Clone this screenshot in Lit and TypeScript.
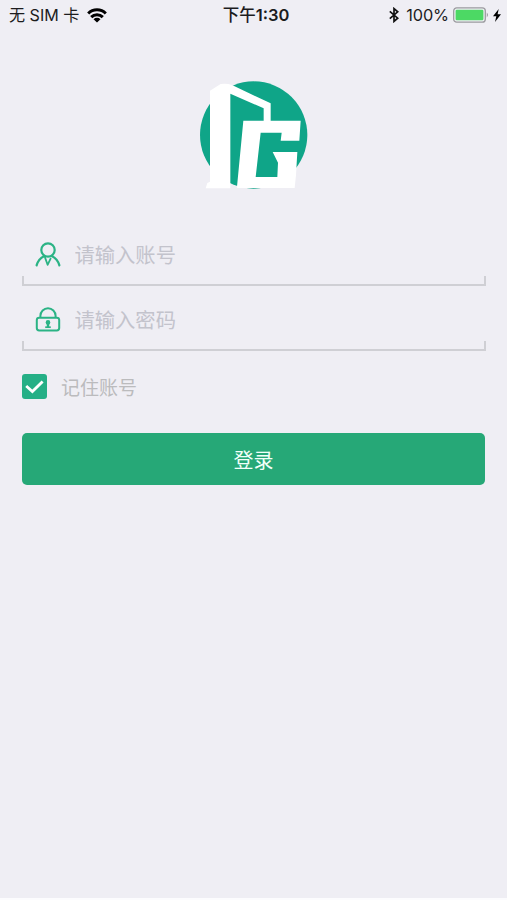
import { LitElement, html, css, svg } from "lit";
import { customElement, property, state } from "lit/decorators.js";

const userIcon = svg`<g fill="none" stroke="#2bb385" stroke-width="2.2" stroke-linecap="round" stroke-linejoin="round">
  <circle cx="13" cy="8" r="6.7"/>
  <path d="M1.6 23.4C2.8 18.8 5.6 15.6 9.4 13.9M24.4 23.4C23.2 18.8 20.4 15.6 16.6 13.9"/>
  <path d="M10 15.4L12.6 22.8L15.6 16.6" stroke-width="1.8"/>
</g>`;

const lockIcon = svg`<g fill="none" stroke="#2bb385" stroke-width="2">
  <rect x="1.8" y="10.7" width="22.4" height="12.8" rx="2.4"/>
  <path d="M5.4 10.4V8.8a7.6 7.6 0 0 1 15.2 0v1.6"/>
  <circle cx="13" cy="15.4" r="2.3" fill="#2bb385" stroke="none"/>
  <path d="M13 16v4.2" stroke-width="2.4"/><path d="M10.2 20.2h5.6" stroke-width="1.7"/>
</g>`;

@customElement("status-bar")
class StatusBar extends LitElement {
  static styles = css`
    :host { display: grid; grid-template-columns: 1fr auto 1fr; align-items: center; height: 30px; padding: 0 6px 0 9px; color: #1c1c1e; font-size: 16px; line-height: 30px; white-space: nowrap; }
    .side { display: flex; align-items: center; }
    .end { justify-content: flex-end; }
    .carrier { font-size: 16.1px; }
    .wifi { margin-left: 8px; }
    .time { font-weight: 600; font-size: 16.5px; margin-left: 2px; }
    .time span { font-weight: 500; }
    .percent { margin: 0 4px 0 7px; font-size: 16.3px; letter-spacing: -0.1px; }
    .bolt { margin-left: 4px; }
    svg { display: block; flex: none; }
  `;
  render() {
    return html`
      <div class="side">
        <span class="carrier">无 SIM 卡</span>
        <svg class="wifi" width="20" height="15" viewBox="0 0 20 15">
          <g fill="none" stroke="#000" stroke-width="3"><path d="M1.2 5.5a12.4 12.4 0 0 1 17.6 0"/><path d="M4.2 9.1a8.2 8.2 0 0 1 11.6 0"/></g>
          <path d="M6.5 11.2a4.9 4.9 0 0 1 7 0L10 14.6z"/>
        </svg>
      </div>
      <span class="time"><span>下午</span>1:30</span>
      <div class="side end">
        <svg width="10" height="16" viewBox="0 0 10 16"><path d="M.8 4.4L8.7 11.2L5 14.4V1.6L8.7 4.8L.8 11.6" fill="none" stroke="#111" stroke-width="1.7"/></svg>
        <span class="percent">100%</span>
        <svg width="36" height="16" viewBox="0 0 36 16"><rect x=".7" y=".8" width="31.6" height="14.4" rx="3" fill="none" stroke="#9b9b9f" stroke-width="1.3"/><rect x="2.6" y="2.8" width="27.8" height="10.4" rx="1.2" fill="#4cd964"/><path d="M33.8 5.6q2 2.4 0 4.8z" fill="#88888c"/></svg>
        <svg class="bolt" width="8" height="13" viewBox="0 0 8 13"><path d="M5.7 0L0 7.2h3.3L2 13L8 5.3H4.6z"/></svg>
      </div>`;
  }
}

@customElement("login-field")
class LoginField extends LitElement {
  @property() icon = "user";
  @property() hint = "";
  @property() kind = "text";
  static styles = css`
    :host { display: grid; grid-template-rows: 44px 10px; height: 54px; }
    .row { display: flex; align-items: center; padding-left: 13px; gap: 13.5px; }
    svg { display: block; flex: none; }
    input { flex: 1; min-width: 0; border: 0; outline: 0; padding: 2px 0 0; box-sizing: border-box; background: none; font: inherit; font-size: 20.3px; height: 34px; color: #333; }
    input::placeholder { color: #c3c3cc; opacity: 1; }
    .rule { border: solid #cfcfd4; border-width: 0 2px 2px; margin-right: -1px; }
  `;
  render() {
    return html`
      <div class="row">
        <svg width="26" height="25" viewBox="0 0 26 25">${this.icon === "user" ? userIcon : lockIcon}</svg>
        <input type=${this.kind} placeholder=${this.hint} />
      </div>
      <div class="rule"></div>`;
  }
}

@customElement("app-root")
class AppRoot extends LitElement {
  @state() private remember = true;
  static styles = css`
    :host { display: flex; flex-direction: column; box-sizing: border-box; height: 100vh; background: #efeef4; border-bottom: 2px solid #fcfcfe; font-family: Inter, "Noto Sans CJK SC", sans-serif; }
    .logo { display: block; margin: 42px auto 30px; }
    form { display: flex; flex-direction: column; padding: 0 22px; }
    .fields { display: grid; gap: 11px; }
    .remember { display: flex; align-items: center; gap: 14px; height: 25px; margin-top: 23px; color: #bbbbbd; font-size: 19px; line-height: 25px; cursor: pointer; }
    .remember span { padding-top: 3px; }
    .box { display: block; width: 25px; height: 25px; border-radius: 3px; background: #25af86; }
    .submit { height: 52px; margin-top: 34px; border: 0; border-radius: 5px; background: #26a877; color: #f2fff9; font: inherit; font-size: 20px; padding: 0; }
  `;
  render() {
    return html`
      <status-bar></status-bar>
      <svg class="logo" width="130" height="130" viewBox="-3 1 390 390">
        <circle cx="191" cy="190" r="161" fill="#0fa588"/>
        <path fill="#fff" fill-rule="evenodd" d="M60 57L92 37Q110 34 126 40L242 95V147H332L328 207H272L275 183H212L197 316H262L264 273L248 241H322L318 310L314 349H142L140 345L121 338V350H47L52 334L60 330ZM121 66V338L141 345L160 147H221V110Z"/>
      </svg>
      <form @submit=${(e: Event) => e.preventDefault()}>
        <div class="fields">
          <login-field icon="user" hint="请输入账号"></login-field>
          <login-field icon="lock" kind="password" hint="请输入密码"></login-field>
        </div>
        <div class="remember" @click=${() => (this.remember = !this.remember)}>
          <svg class="box" viewBox="0 0 25 25">${this.remember ? svg`<path d="M4.2 12L10.4 17.6L20.6 7.4" fill="none" stroke="#fff" stroke-width="2.8"/>` : null}</svg>
          <span>记住账号</span>
        </div>
        <button class="submit">登录</button>
      </form>`;
  }
}
